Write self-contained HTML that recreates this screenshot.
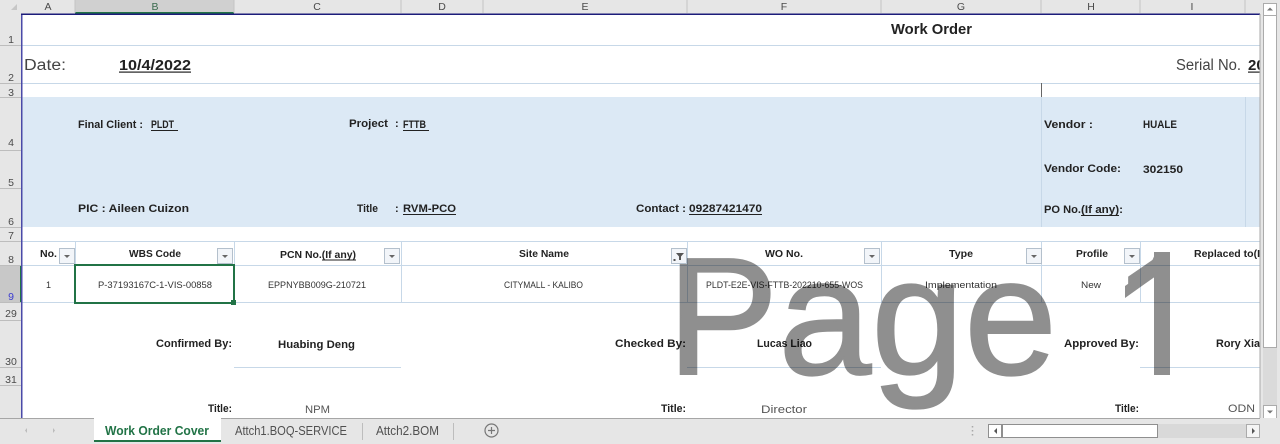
<!DOCTYPE html>
<html><head><meta charset="utf-8"><style>
html,body{margin:0;padding:0;background:#fff;width:1280px;height:444px;overflow:hidden}
svg{display:block;font-family:"Liberation Sans",sans-serif;filter:blur(.3px)}
.b{font-weight:700;fill:#222}
.h{font-size:10.500px;fill:#4a4a4a;text-anchor:middle}
.d{font-size:9px;fill:#333}
.wm{mix-blend-mode:multiply}
</style></head><body>
<svg width="1280" height="444" viewBox="0 0 1280 444" xmlns="http://www.w3.org/2000/svg">
<defs><clipPath id="c"><rect x="22" y="15" width="1238" height="403"/></clipPath>
<clipPath id="nofoot"><path d="M1100 230h70v128h-70z"/></clipPath>
<g id="fb"><rect x=".5" y=".5" width="15" height="15" fill="#f2f5f9" stroke="#b4c0cc"/><path d="M5 7h6l-3 3z" fill="#666"/></g></defs>

<rect width="1280" height="444" fill="#e6e6e6"/>
<rect x="22" y="15" width="1238" height="403" fill="#fff"/>

<!-- headers -->
<rect x="75" y="0" width="159" height="13" fill="#d0d0d0"/>
<rect x="75" y="12" width="159" height="2" fill="#217346"/>
<rect x="0" y="265" width="21" height="37" fill="#c8c8c8"/>
<rect x="20" y="265" width="2" height="37" fill="#217346"/>
<path d="M75 0v13M234 0v13M401 0v13M483 0v13M687 0v13M881 0v13M1041 0v13M1140 0v13M1245 0v13" stroke="#c4c4c4"/>
<path d="M0 45.500h21M0 83.500h21M0 97.500h21M0 150.500h21M0 188.500h21M0 227.500h21M0 241.500h21M0 265.500h21M0 302.500h21M0 320.500h21M0 367.500h21M0 385.500h21" stroke="#bdbdbd"/>
<path d="M17 4v6h-6z" fill="#c6c6c6"/>
<g class="h">
<text x="48" y="10">A</text><text x="155" y="10" fill="#3a6b4f">B</text><text x="317" y="10">C</text><text x="442" y="10">D</text><text x="585" y="10">E</text><text x="784" y="10">F</text><text x="961" y="10">G</text><text x="1091" y="10">H</text><text x="1192" y="10">I</text>
<text x="11" y="43">1</text><text x="11" y="81">2</text><text x="11" y="96">3</text><text x="11" y="146">4</text><text x="11" y="186">5</text><text x="11" y="225">6</text><text x="11" y="239">7</text><text x="11" y="263">8</text><text x="11" y="300" style="fill:#3a3ad0">9</text><text x="11" y="317">29</text><text x="11" y="365">30</text><text x="11" y="383">31</text>
</g>

<!-- sheet body -->
<g clip-path="url(#c)">
<rect x="22" y="97" width="1238" height="130" fill="#dce9f5"/>
<path d="M22 45.500h1238M22 83.500h1238M22 241.500h1238M22 265.500h1238M22 302.500h1238M234 367.500h167M687 367.500h194M1140 367.500h120" stroke="#c7d8e8"/>
<path d="M1041.500 97v130M1245.500 97v130M75.500 241v61M234.500 241v61M401.500 241v61M687.500 241v61M881.500 241v61M1041.500 241v61M1140.500 241v61" stroke="#c7d8e8"/>
<path d="M1041.500 83v14" stroke="#666"/>

<text class="b" x="891" y="34" font-size="15" textLength="81" lengthAdjust="spacingAndGlyphs">Work Order</text>
<text x="24" y="70" font-size="15.500" fill="#444" textLength="42" lengthAdjust="spacingAndGlyphs">Date:</text>
<text class="b" x="119" y="70" font-size="15" textLength="72" lengthAdjust="spacingAndGlyphs">10/4/2022</text>
<rect x="119" y="71.500" width="72" height="1.200" fill="#222"/>
<text x="1176" y="70" font-size="15.500" fill="#444" textLength="65" lengthAdjust="spacingAndGlyphs">Serial No.</text>
<text class="b" x="1248" y="70" font-size="15">20</text>
<rect x="1248" y="71.500" width="12" height="1.200" fill="#222"/>

<g class="b" font-size="11">
<text x="78" y="128" textLength="65" lengthAdjust="spacingAndGlyphs">Final Client :</text>
<text x="151" y="128" textLength="23" lengthAdjust="spacingAndGlyphs">PLDT</text>
<rect x="151" y="130" width="27" height="1" fill="#222"/>
<text x="349" y="127" textLength="39" lengthAdjust="spacingAndGlyphs">Project</text>
<text x="395" y="127">:</text>
<text x="403" y="128" textLength="23" lengthAdjust="spacingAndGlyphs">FTTB</text>
<rect x="403" y="130" width="26" height="1" fill="#222"/>
<text x="1044" y="128" textLength="49" lengthAdjust="spacingAndGlyphs">Vendor :</text>
<text x="1143" y="128" textLength="34" lengthAdjust="spacingAndGlyphs">HUALE</text>
<text x="1044" y="172" textLength="77" lengthAdjust="spacingAndGlyphs">Vendor Code:</text>
<text x="1143" y="173" textLength="40" lengthAdjust="spacingAndGlyphs">302150</text>
<text x="78" y="212" textLength="111" lengthAdjust="spacingAndGlyphs">PIC  : Aileen Cuizon</text>
<text x="357" y="212" textLength="21" lengthAdjust="spacingAndGlyphs">Title</text>
<text x="395" y="212">:</text>
<text x="403" y="212" textLength="53" lengthAdjust="spacingAndGlyphs">RVM-PCO</text>
<rect x="403" y="214" width="53" height="1" fill="#222"/>
<text x="636" y="212" textLength="50" lengthAdjust="spacingAndGlyphs">Contact :</text>
<text x="689" y="212" textLength="73" lengthAdjust="spacingAndGlyphs">09287421470</text>
<rect x="689" y="214" width="73" height="1" fill="#222"/>
<text x="1044" y="213" textLength="37" lengthAdjust="spacingAndGlyphs">PO No.</text>
<text x="1081" y="213" textLength="42" lengthAdjust="spacingAndGlyphs">(If any):</text>
<rect x="1081" y="215" width="38" height="1" fill="#222"/>
</g>

<g class="b" font-size="10.500">
<text x="40" y="257" textLength="17" lengthAdjust="spacingAndGlyphs">No.</text>
<text x="129" y="257" textLength="52" lengthAdjust="spacingAndGlyphs">WBS Code</text>
<text x="280" y="258" textLength="76" lengthAdjust="spacingAndGlyphs">PCN No.(If any)</text>
<rect x="322" y="259.500" width="34" height="1" fill="#222"/>
<text x="519" y="257" textLength="50" lengthAdjust="spacingAndGlyphs">Site Name</text>
<text x="765" y="257" textLength="38" lengthAdjust="spacingAndGlyphs">WO No.</text>
<text x="949" y="257" textLength="24" lengthAdjust="spacingAndGlyphs">Type</text>
<text x="1076" y="257" textLength="32" lengthAdjust="spacingAndGlyphs">Profile</text>
<text x="1194" y="257" textLength="66" lengthAdjust="spacingAndGlyphs">Replaced to(I</text>
</g>
<use href="#fb" x="59" y="248"/><use href="#fb" x="217" y="248"/><use href="#fb" x="384" y="248"/>
<use href="#fb" x="864" y="248"/><use href="#fb" x="1026" y="248"/><use href="#fb" x="1124" y="248"/>

<g class="d">
<text x="46" y="288">1</text>
<text x="98" y="288" textLength="114" lengthAdjust="spacingAndGlyphs">P-37193167C-1-VIS-00858</text>
<text x="268" y="288" textLength="98" lengthAdjust="spacingAndGlyphs">EPPNYBB009G-210721</text>
<text x="504" y="288" textLength="79" lengthAdjust="spacingAndGlyphs">CITYMALL - KALIBO</text>
<text x="706" y="288" textLength="157" lengthAdjust="spacingAndGlyphs">PLDT-E2E-VIS-FTTB-202210-655-WOS</text>
<text x="925" y="288" textLength="72" lengthAdjust="spacingAndGlyphs">Implementation</text>
<text x="1081" y="288" textLength="20" lengthAdjust="spacingAndGlyphs">New</text>
</g>
<rect x="75" y="265" width="159" height="38" fill="none" stroke="#217346" stroke-width="2"/>
<rect x="231" y="300" width="5" height="5" fill="#217346"/>

<g class="b" font-size="11">
<text x="156" y="347" textLength="76" lengthAdjust="spacingAndGlyphs">Confirmed By:</text>
<text x="278" y="348" textLength="77" lengthAdjust="spacingAndGlyphs">Huabing Deng</text>
<text x="615" y="347" textLength="71" lengthAdjust="spacingAndGlyphs">Checked By:</text>
<text x="757" y="347" textLength="55" lengthAdjust="spacingAndGlyphs">Lucas Liao</text>
<text x="1064" y="347" textLength="75" lengthAdjust="spacingAndGlyphs">Approved By:</text>
<text x="1216" y="347" textLength="44" lengthAdjust="spacingAndGlyphs">Rory Xia</text>
<text x="208" y="412" textLength="24" lengthAdjust="spacingAndGlyphs">Title:</text>
<text x="661" y="412" textLength="25" lengthAdjust="spacingAndGlyphs">Title:</text>
<text x="1115" y="412" textLength="24" lengthAdjust="spacingAndGlyphs">Title:</text>
</g>
<g font-size="11" fill="#555">
<text x="305" y="413" textLength="25" lengthAdjust="spacingAndGlyphs">NPM</text>
<text x="761" y="413" textLength="46" lengthAdjust="spacingAndGlyphs">Director</text>
<text x="1228" y="412" textLength="27" lengthAdjust="spacingAndGlyphs">ODN</text>
</g>

<!-- watermark -->
<g class="wm" fill="#8f8f8f">
<text x="667" y="374" font-size="167" stroke="#8f8f8f" stroke-width="2">Page</text>
<g stroke="#8f8f8f" stroke-width="2" clip-path="url(#nofoot)"><text x="1113" y="374" font-size="168">1</text></g>
<rect x="1154" y="252" width="16" height="123"/>
<path d="M1125 286L1148 270L1156 252L1156 276L1125 298z"/>
</g>

<rect x="671.500" y="248.500" width="15" height="15" fill="#f2f5f9" stroke="#b4c0cc"/>
<path d="M676 253h8l-3 3.500v3.500h-2v-3.500z" fill="#555"/><rect x="673.500" y="259" width="2" height="2" fill="#555"/>
</g>

<!-- frame -->
<rect x="21" y="14" width="1.500" height="404" fill="#4a4aa8"/>
<rect x="21" y="13.500" width="1239" height="1.500" fill="#1c1c7a"/>
<rect x="1259.500" y="14" width="1" height="404" fill="#a8a8a8"/>

<!-- vertical scrollbar -->
<rect x="1263" y="15" width="14" height="390" fill="#dadada"/>
<rect x="1263.500" y="15.500" width="13" height="332" fill="#fff" stroke="#ababab"/>
<rect x="1263.500" y="3.500" width="13" height="12" fill="#fff" stroke="#ababab"/>
<path d="M1267 10.500h6l-3-3z" fill="#777"/>
<rect x="1263.500" y="405.500" width="13" height="13" fill="#fff" stroke="#ababab"/>
<path d="M1267 410.500h6l-3 3z" fill="#777"/>

<!-- tab bar -->
<rect x="0" y="418" width="1280" height="26" fill="#e6e6e6"/>
<rect x="0" y="418" width="1260" height="1" fill="#a6a6a6"/>
<path d="M27 428v5l-2-2.500zM53 428v5l2-2.500z" fill="#bcbcbc"/>
<rect x="94" y="418" width="127" height="23" fill="#fff"/>
<rect x="94" y="440" width="127" height="2" fill="#217346"/>
<text x="105" y="435" font-size="12.500" font-weight="700" fill="#217346" textLength="104" lengthAdjust="spacingAndGlyphs">Work Order Cover</text>
<text x="235" y="435" font-size="12.500" fill="#505050" textLength="112" lengthAdjust="spacingAndGlyphs">Attch1.BOQ-SERVICE</text>
<text x="376" y="435" font-size="12.500" fill="#505050" textLength="63" lengthAdjust="spacingAndGlyphs">Attch2.BOM</text>
<path d="M362.500 423v17M453.500 423v17" stroke="#bdbdbd"/>
<circle cx="491.500" cy="430.500" r="6.500" fill="none" stroke="#777" stroke-width="1.200"/>
<path d="M488 430.500h7M491.500 427v7" stroke="#777" stroke-width="1.200"/>
<path d="M972.500 426v1.500M972.500 430v1.500M972.500 434v1.500" stroke="#a8a8a8" stroke-width="1.500"/>

<!-- horizontal scrollbar -->
<rect x="988" y="424" width="272" height="14" fill="#d9d9d9"/>
<rect x="988.500" y="424.500" width="13" height="13" fill="#fff" stroke="#8f8f8f"/>
<path d="M997 428v6l-3-3z" fill="#555"/>
<rect x="1002.500" y="424.500" width="155" height="13" fill="#fff" stroke="#8f8f8f"/>
<rect x="1246.500" y="424.500" width="13" height="13" fill="#f4f4f4" stroke="#ababab"/>
<path d="M1252 428v6l3-3z" fill="#555"/>
</svg>
</body></html>
